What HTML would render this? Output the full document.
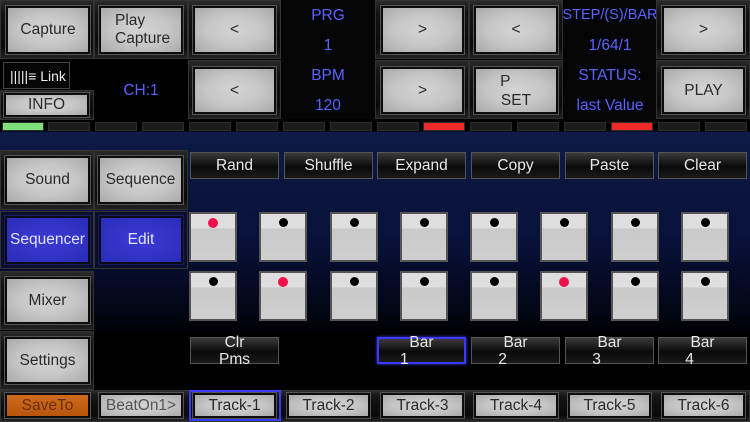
<!DOCTYPE html><html><head><style>
*{margin:0;padding:0;box-sizing:border-box}
body{width:750px;height:422px;overflow:hidden;position:relative;font-family:"Liberation Sans",sans-serif;
background:linear-gradient(180deg,#000 0,#000 131px,#0e1a48 132px,#0c1740 170px,#08113a 240px,#030716 310px,#000 335px,#000 422px)}
.a{position:absolute}
.cell{position:absolute;background:linear-gradient(#2a2a2a,#141414 20%,#0a0a0a 80%,#222);border:1px solid #333}
.gb{position:absolute;background:radial-gradient(ellipse at center,#d4d4d4 0,#c6c6c6 50%,#a9a9a9 100%);border:2px solid #0c0c0c;box-shadow:0 0 0 1px #555;color:#2a2a2a;font-size:15.5px;display:flex;align-items:center;justify-content:center;text-align:center;line-height:18px}
.bb{background:radial-gradient(ellipse at center,#3b3bd6,#2b2bb8);color:#e0e0ff;box-shadow:0 0 0 1px #1a1a60}
.blue{color:#5a63ff;font-size:15.5px;text-align:center;position:absolute}
.led{position:absolute;top:122px;height:9px;width:42px;background:#1c1c1c;border:1px solid #2c2c2c}
.db{position:absolute;height:27px;background:linear-gradient(#3a3a3a,#0a0a0a 55%,#1a1a1a);border:1px solid #555;color:#e8e8e8;font-size:15.5px;display:flex;align-items:center;justify-content:center;text-align:center;line-height:17px}
.pad{position:absolute;width:48px;height:50px;border:2px solid #555;background:linear-gradient(#dedede 0,#dedede 14px,#c9c9c9 15px,#cfcfcf)}
.pad i{position:absolute;left:18px;top:4px;width:9px;height:9px;border-radius:50%;background:#000}
.pad i.r{background:#f0104a;width:10px;height:10px;left:17px}
.tr{position:absolute;top:393px;height:25px;font-size:15.5px}
</style></head><body>
<div class="cell" style="left:0;top:0;width:94px;height:59px"></div>
<div class="gb" style="left:6px;top:6px;width:84px;height:48px">Capture</div>
<div class="cell" style="left:94px;top:0;width:94px;height:59px"></div>
<div class="gb" style="left:99px;top:6px;width:84px;height:48px;justify-content:flex-start;text-align:left;padding-left:14px">Play<br>Capture</div>
<div class="cell" style="left:188px;top:0;width:93px;height:59px"></div>
<div class="gb" style="left:193px;top:6px;width:83px;height:48px">&lt;</div>
<div class="cell" style="left:188px;top:60px;width:93px;height:59px"></div>
<div class="gb" style="left:193px;top:67px;width:83px;height:47px">&lt;</div>
<div class="a" style="left:3px;top:62px;width:67px;height:27px;border:1px solid #444;background:#050505;color:#eee;font-size:14px;padding:5px 0 0 6px">|||||≡ Link</div>
<div class="cell" style="left:0;top:90px;width:94px;height:30px"></div>
<div class="gb" style="left:4px;top:93px;width:85px;height:24px">INFO</div>
<div class="blue" style="left:94px;top:82px;width:94px">CH:1</div>
<div class="a" style="left:282px;top:0;width:93px;height:119px;background:#050505"></div>
<div class="blue" style="left:281px;top:7px;width:94px">PRG</div>
<div class="blue" style="left:281px;top:37px;width:94px">1</div>
<div class="blue" style="left:281px;top:67px;width:94px">BPM</div>
<div class="blue" style="left:281px;top:97px;width:94px">120</div>
<div class="cell" style="left:375px;top:0;width:94px;height:59px"></div>
<div class="gb" style="left:381px;top:6px;width:83px;height:48px">&gt;</div>
<div class="cell" style="left:375px;top:60px;width:94px;height:59px"></div>
<div class="gb" style="left:381px;top:67px;width:83px;height:47px">&gt;</div>
<div class="cell" style="left:469px;top:0;width:94px;height:59px"></div>
<div class="gb" style="left:474px;top:6px;width:84px;height:48px">&lt;</div>
<div class="cell" style="left:469px;top:60px;width:94px;height:59px"></div>
<div class="gb" style="left:474px;top:67px;width:84px;height:47px;line-height:19px">P&nbsp;&nbsp;&nbsp;&nbsp;&nbsp;<br>SET</div>
<div class="a" style="left:564px;top:0;width:92px;height:120px;background:#050505"></div>
<div class="blue" style="left:560px;top:7px;width:100px;font-size:14.5px">STEP/(S)/BAR</div>
<div class="blue" style="left:563px;top:37px;width:94px">1/64/1</div>
<div class="blue" style="left:563px;top:67px;width:94px">STATUS:</div>
<div class="blue" style="left:563px;top:97px;width:94px">last Value</div>
<div class="cell" style="left:656px;top:0;width:94px;height:59px"></div>
<div class="gb" style="left:662px;top:6px;width:83px;height:48px">&gt;</div>
<div class="cell" style="left:656px;top:60px;width:94px;height:59px"></div>
<div class="gb" style="left:662px;top:67px;width:83px;height:47px">PLAY</div>
<div class="led" style="left:2px;background:#7de07a"></div>
<div class="led" style="left:48px"></div><div class="led" style="left:95px"></div><div class="led" style="left:142px"></div>
<div class="led" style="left:189px"></div><div class="led" style="left:236px"></div><div class="led" style="left:283px"></div>
<div class="led" style="left:330px"></div><div class="led" style="left:377px"></div><div class="led" style="left:423px;background:#ee2a2a"></div>
<div class="led" style="left:470px"></div><div class="led" style="left:517px"></div><div class="led" style="left:564px"></div>
<div class="led" style="left:611px;background:#ee2a2a"></div><div class="led" style="left:658px"></div><div class="led" style="left:705px"></div>
<div class="cell" style="left:0;top:150px;width:94px;height:60px"></div>
<div class="gb" style="left:5px;top:156px;width:85px;height:48px">Sound</div>
<div class="cell" style="left:94px;top:150px;width:94px;height:60px"></div>
<div class="gb" style="left:98px;top:156px;width:85px;height:48px">Sequence</div>
<div class="cell" style="left:0;top:211px;width:94px;height:58px;background:#0a0f30"></div>
<div class="gb bb" style="left:5px;top:216px;width:85px;height:48px">Sequencer</div>
<div class="cell" style="left:94px;top:211px;width:94px;height:58px;background:#0a0f30"></div>
<div class="gb bb" style="left:99px;top:216px;width:84px;height:48px">Edit</div>
<div class="cell" style="left:0;top:271px;width:94px;height:59px"></div>
<div class="gb" style="left:5px;top:277px;width:85px;height:47px">Mixer</div>
<div class="cell" style="left:0;top:331px;width:94px;height:59px"></div>
<div class="gb" style="left:5px;top:337px;width:85px;height:47px">Settings</div>
<div class="db" style="left:190px;top:152px;width:89px">Rand</div>
<div class="db" style="left:284px;top:152px;width:89px">Shuffle</div>
<div class="db" style="left:377px;top:152px;width:89px">Expand</div>
<div class="db" style="left:471px;top:152px;width:89px">Copy</div>
<div class="db" style="left:565px;top:152px;width:89px">Paste</div>
<div class="db" style="left:658px;top:152px;width:89px">Clear</div>
<div class="pad" style="left:189px;top:212px"><i class="r"></i></div>
<div class="pad" style="left:259px;top:212px"><i></i></div>
<div class="pad" style="left:330px;top:212px"><i></i></div>
<div class="pad" style="left:400px;top:212px"><i></i></div>
<div class="pad" style="left:470px;top:212px"><i></i></div>
<div class="pad" style="left:540px;top:212px"><i></i></div>
<div class="pad" style="left:611px;top:212px"><i></i></div>
<div class="pad" style="left:681px;top:212px"><i></i></div>
<div class="pad" style="left:189px;top:271px"><i></i></div>
<div class="pad" style="left:259px;top:271px"><i class="r"></i></div>
<div class="pad" style="left:330px;top:271px"><i></i></div>
<div class="pad" style="left:400px;top:271px"><i></i></div>
<div class="pad" style="left:470px;top:271px"><i></i></div>
<div class="pad" style="left:540px;top:271px"><i class="r"></i></div>
<div class="pad" style="left:611px;top:271px"><i></i></div>
<div class="pad" style="left:681px;top:271px"><i></i></div>
<div class="db" style="left:190px;top:337px;width:89px">Clr<br>Pms</div>
<div class="db" style="left:377px;top:337px;width:89px;border:2px solid #3a3aff;box-shadow:0 0 3px #3a3aff">Bar<br>1&nbsp;&nbsp;&nbsp;&nbsp;&nbsp;&nbsp;&nbsp;&nbsp;</div>
<div class="db" style="left:471px;top:337px;width:89px">Bar<br>2&nbsp;&nbsp;&nbsp;&nbsp;&nbsp;&nbsp;</div>
<div class="db" style="left:565px;top:337px;width:89px">Bar<br>3&nbsp;&nbsp;&nbsp;&nbsp;&nbsp;&nbsp;</div>
<div class="db" style="left:658px;top:337px;width:89px">Bar<br>4&nbsp;&nbsp;&nbsp;&nbsp;&nbsp;&nbsp;</div>
<div class="cell" style="left:0;top:390px;width:750px;height:32px"></div>
<div class="gb tr" style="left:5px;width:85px;background:linear-gradient(#d06a1c,#b8560e);color:#6a2f08">SaveTo</div>
<div class="gb tr" style="left:99px;width:84px;color:#555">BeatOn1&gt;</div>
<div class="a" style="left:189px;top:390px;width:92px;height:31px;border:2px solid #3a3aff"></div>
<div class="gb tr" style="left:193px;width:83px">Track-1</div>
<div class="gb tr" style="left:287px;width:83px">Track-2</div>
<div class="gb tr" style="left:381px;width:83px">Track-3</div>
<div class="gb tr" style="left:474px;width:84px">Track-4</div>
<div class="gb tr" style="left:568px;width:83px">Track-5</div>
<div class="gb tr" style="left:662px;width:83px">Track-6</div>
</body></html>
